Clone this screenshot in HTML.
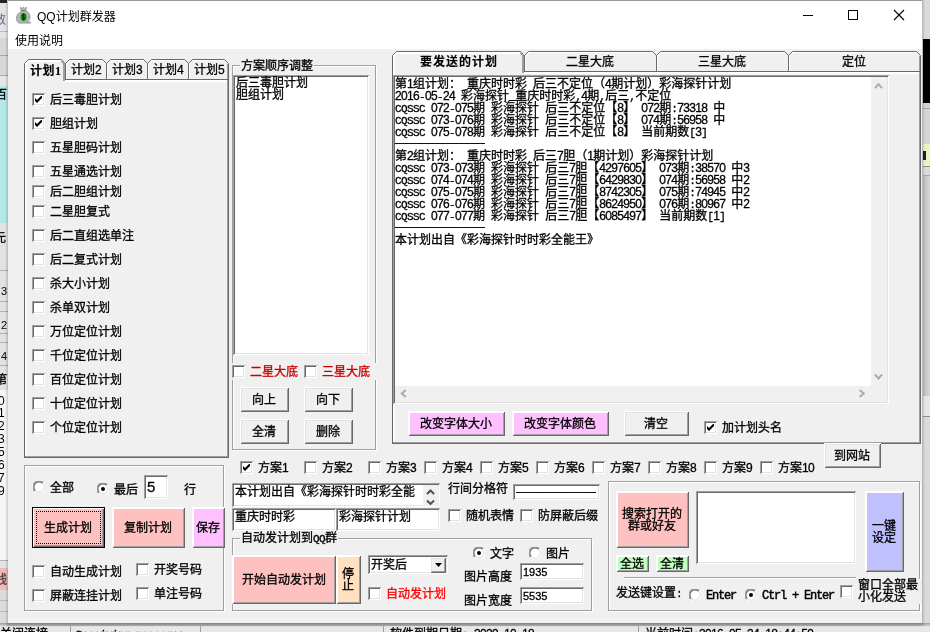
<!DOCTYPE html>
<html lang="zh-CN"><head><meta charset="utf-8"><title>QQ计划群发器</title>
<style>
html,body{margin:0;padding:0}
body{width:930px;height:632px;overflow:hidden;position:relative;background:#d9d9d9;
 font-family:"Liberation Sans","Noto Sans CJK SC",sans-serif;font-size:12px;line-height:12px;color:#000}
#root{position:absolute;left:0;top:0;width:930px;height:632px;overflow:hidden;will-change:transform;-webkit-text-stroke:0.3px}
.a{position:absolute;box-sizing:border-box}
.t{white-space:pre;font-size:12px;line-height:12px;height:12px}
.m{font-family:"Liberation Mono",monospace;font-size:11px;line-height:12px;letter-spacing:-0.6px}
.d{font-family:"Liberation Sans",sans-serif;font-size:12px;line-height:12px;letter-spacing:-0.67px}
.cb{background:#fff;box-shadow:inset 1px 1px 0 #a0a0a0,inset -1px -1px 0 #fff,inset 2px 2px 0 #696969,inset -2px -2px 0 #e3e3e3}
.ck{position:absolute;left:3px;top:3px}
.btn{box-shadow:inset 1px 1px 0 #fff,inset -1px -1px 0 #696969,inset 2px 2px 0 #fff,inset -2px -2px 0 #a0a0a0;display:flex;align-items:center;justify-content:center}
.btn.g{box-shadow:inset 1px 1px 0 #fff,inset -1px -1px 0 #696969,inset 2px 2px 0 #e3e3e3,inset -2px -2px 0 #a0a0a0}
.bt{text-align:center;white-space:pre;line-height:12px}
.tb{background:#fff;box-shadow:inset 1px 1px 0 #a0a0a0,inset -1px -1px 0 #fff,inset 2px 2px 0 #696969,inset -2px -2px 0 #e3e3e3;overflow:hidden}
.tt{position:absolute;left:3px;top:3px;white-space:pre;line-height:12px}
.fr{border:1px solid #a0a0a0;box-shadow:1px 1px 0 #fff,inset 1px 1px 0 #fff}
.red{color:#c80000}
</style></head><body><div id="root">
<div class="a " style="left:0px;top:0px;width:8px;height:632px;background:#e4e4e4"></div><div class="a " style="left:0px;top:0px;width:7px;height:3px;background:#202820"></div><div class="a " style="left:0px;top:31px;width:8px;height:1px;background:#b8b8b8"></div><div class="a " style="left:0px;top:38px;width:8px;height:48px;background:#d8d8d8"></div><div class="a " style="left:0px;top:55px;width:8px;height:1px;background:#a8a8a8"></div><div class="a " style="left:0px;top:75px;width:8px;height:1px;background:#a8a8a8"></div><div class="a " style="left:0px;top:76px;width:8px;height:10px;background:#e6e6e6"></div><div class="a " style="left:0px;top:86px;width:8px;height:137px;background:#b2eaea"></div><div class="a " style="left:0px;top:223px;width:8px;height:170px;background:#e2e2e2"></div><div class="a " style="left:0px;top:270px;width:8px;height:1px;background:#b0b0b0"></div><div class="a " style="left:0px;top:301px;width:8px;height:1px;background:#b0b0b0"></div><div class="a " style="left:0px;top:311px;width:8px;height:1px;background:#b0b0b0"></div><div class="a " style="left:0px;top:333px;width:8px;height:1px;background:#b0b0b0"></div><div class="a " style="left:0px;top:342px;width:8px;height:1px;background:#b0b0b0"></div><div class="a " style="left:0px;top:365px;width:8px;height:1px;background:#b0b0b0"></div><div class="a " style="left:0px;top:374px;width:8px;height:1px;background:#b0b0b0"></div><div class="a " style="left:0px;top:390px;width:8px;height:170px;background:#f6f6f6"></div><div class="a " style="left:0px;top:560px;width:8px;height:1px;background:#b0b0b0"></div><div class="a " style="left:0px;top:568px;width:8px;height:22px;background:#f4b8b8"></div><div class="a " style="left:0px;top:590px;width:8px;height:42px;background:#dcdcdc"></div><div class="a " style="left:0px;top:600px;width:8px;height:1px;background:#b8b8b8"></div><div class="a " style="left:0px;top:611px;width:8px;height:1px;background:#b8b8b8"></div><div class="a t" style="left:-6px;top:14px;color:#5b6b8c;-webkit-text-stroke:0">数</div><div class="a t" style="left:-5px;top:89px">百</div><div class="a t" style="left:-6px;top:232px">元</div><div class="a t" style="left:1px;top:285px;font-size:11px;-webkit-text-stroke:0">3</div><div class="a t" style="left:1px;top:319px;font-size:11px;-webkit-text-stroke:0">2</div><div class="a t" style="left:1px;top:350px;font-size:11px;-webkit-text-stroke:0">4</div><div class="a t" style="left:-5px;top:374px">第</div><div class="a t" style="left:-2px;top:395px;font-size:12px;-webkit-text-stroke:0">0</div><div class="a t" style="left:-2px;top:407px;font-size:12px;-webkit-text-stroke:0">1</div><div class="a t" style="left:-2px;top:420px;font-size:12px;-webkit-text-stroke:0">2</div><div class="a t" style="left:-2px;top:433px;font-size:12px;-webkit-text-stroke:0">3</div><div class="a t" style="left:-2px;top:446px;font-size:12px;-webkit-text-stroke:0">5</div><div class="a t" style="left:-2px;top:459px;font-size:12px;-webkit-text-stroke:0">6</div><div class="a t" style="left:-2px;top:472px;font-size:12px;-webkit-text-stroke:0">7</div><div class="a t" style="left:-2px;top:485px;font-size:12px;-webkit-text-stroke:0">9</div><div class="a t" style="left:-5px;top:574px;color:#444">线</div><div class="a " style="left:922px;top:0px;width:8px;height:632px;background:#dadada"></div><div class="a " style="left:923px;top:39px;width:7px;height:64px;background:#000"></div><div class="a " style="left:923px;top:103px;width:7px;height:41px;background:#d4d4d4"></div><div class="a " style="left:923px;top:108px;width:7px;height:1px;background:#a8a8a8"></div><div class="a " style="left:923px;top:144px;width:7px;height:22px;background:#efefc4"></div><div class="a " style="left:923px;top:151px;width:3px;height:9px;background:#222"></div><div class="a " style="left:923px;top:166px;width:7px;height:1px;background:#909090"></div><div class="a " style="left:923px;top:175px;width:7px;height:1px;background:#a8a8a8"></div><div class="a " style="left:923px;top:176px;width:7px;height:220px;background:linear-gradient(90deg,#bdbdbd,#d6d6d6)"></div><div class="a " style="left:923px;top:396px;width:7px;height:20px;background:#e6e6e6"></div><div class="a " style="left:923px;top:416px;width:7px;height:1px;background:#909090"></div><div class="a " style="left:0px;top:623px;width:930px;height:9px;background:#e8e8e8"></div><div class="a " style="left:0px;top:623px;width:930px;height:4px;background:linear-gradient(#9a9a9a,#e8e8e8)"></div><div class="a t " style="left:0px;top:628px;">关闭连接</div><div class="a t " style="left:76px;top:628px;"><span class="m">Receiving message:</span></div><div class="a t " style="left:390px;top:628px;">软件到期日期<span class="m">: </span><span class="d">2029</span><span class="m">-</span><span class="d">10</span><span class="m">-</span><span class="d">18</span></div><div class="a t " style="left:645px;top:628px;">当前时间<span class="m">:</span><span class="d">2016</span><span class="m">-</span><span class="d">05</span><span class="m">-</span><span class="d">24</span><span class="m"> </span><span class="d">18</span><span class="m">:</span><span class="d">44</span><span class="m">:</span><span class="d">59</span></div><div class="a " style="left:70px;top:626px;width:1px;height:6px;background:#a0a0a0"></div><div class="a " style="left:200px;top:626px;width:1px;height:6px;background:#a0a0a0"></div><div class="a " style="left:383px;top:626px;width:1px;height:6px;background:#a0a0a0"></div><div class="a " style="left:638px;top:626px;width:1px;height:6px;background:#a0a0a0"></div><div class="a " style="left:5px;top:0px;width:920px;height:626px;background:linear-gradient(90deg,rgba(0,0,0,.0),rgba(0,0,0,.18) 3px,rgba(0,0,0,.18) 917px,rgba(0,0,0,0))"></div><div class="a " style="left:8px;top:0px;width:914px;height:623px;background:#f0f0f0;border-top:1px solid #9a9a9a"></div><div class="a " style="left:8px;top:1px;width:914px;height:48px;background:#fff"></div><svg class="a" style="left:16px;top:6px" width="17" height="18" viewBox="0 0 17 18"><path d="M4.5 1.2l1.6 1.3 1.4-1.4 1.4 1.4 1.6-1.3-0.8 3.6c3 1.2 4.5 3.8 4.3 6.8-.2 2.5-1.8 4-3.2 4.3l3.6.300v.900H3.1c-1.8-.800-2.8-2.9-2.6-5.2.200-2.8 1.8-5 4.7-6.1z" fill="#b4b4b4" stroke="#8c8c8c" stroke-width=".8"/><path d="M5.3 4.6h4.4" stroke="#707070" stroke-width="1"/><ellipse cx="7.5" cy="11" rx="2.9" ry="4.1" fill="#0a8a0a"/><path d="M8.7 9.2c-.900-.900-2.4-.500-2.3.500.1 1.2 2.3.900 2.4 2.2.100 1.1-1.6 1.4-2.6.400M7.5 7.6v6.8" fill="none" stroke="#083808" stroke-width=".9"/></svg><div class="a" style="left:37px;top:9px;font-size:12px;line-height:16px;white-space:pre;-webkit-text-stroke:0">QQ计划群发器</div><div class="a" style="left:15px;top:33px;font-size:12px;line-height:16px;white-space:pre;-webkit-text-stroke:0">使用说明</div><svg class="a" style="left:790px;top:1px" width="132" height="30" viewBox="0 0 132 30"><path d="M13 14.5h10" stroke="#000" stroke-width="1"/><rect x="58.5" y="9.5" width="9" height="9" fill="none" stroke="#000" stroke-width="1"/><path d="M104 9l10 10M114 9l-10 10" stroke="#000" stroke-width="1.1"/></svg><svg class="a" style="left:22px;top:57px" width="210" height="404" viewBox="22 57 210 404"><rect x="24" y="79" width="1" height="379" fill="#696969"/><rect x="25" y="80" width="2" height="376" fill="#fff"/><rect x="25" y="80" width="202" height="2" fill="#fff"/><rect x="227" y="80" width="1" height="377" fill="#a0a0a0"/><rect x="228" y="79" width="1" height="379" fill="#696969"/><rect x="25" y="456" width="203" height="1" fill="#a0a0a0"/><rect x="24" y="457" width="205" height="1" fill="#696969"/><path d="M65.5 79V63.5l4 -4H102.5l4 4V79" fill="none" stroke="#696969"/><path d="M66.5 79V64l3.5 -3.5H102" fill="none" stroke="#fff"/><rect x="66" y="79" width="41" height="1" fill="#696969"/><path d="M106.5 79V63.5l4 -4H143.5l4 4V79" fill="none" stroke="#696969"/><path d="M107.5 79V64l3.5 -3.5H143" fill="none" stroke="#fff"/><rect x="107" y="79" width="41" height="1" fill="#696969"/><path d="M147.5 79V63.5l4 -4H184.5l4 4V79" fill="none" stroke="#696969"/><path d="M148.5 79V64l3.5 -3.5H184" fill="none" stroke="#fff"/><rect x="148" y="79" width="41" height="1" fill="#696969"/><path d="M188.5 79V63.5l4 -4H224.5l4 4V79" fill="none" stroke="#696969"/><path d="M189.5 79V64l3.5 -3.5H224" fill="none" stroke="#fff"/><rect x="189" y="79" width="40" height="1" fill="#696969"/><rect x="227" y="64" width="1" height="15" fill="#a0a0a0"/><path d="M25 82V63.5l4 -4H61l4 4V82z" fill="#f0f0f0"/><path d="M24.5 82V63.5l4 -4H61.5l3 3" fill="none" stroke="#696969"/><path d="M26 82V64l3 -3H61" fill="none" stroke="#fff" stroke-width="2"/><path d="M61.5 60.5l2.5 3V81" fill="none" stroke="#a0a0a0" stroke-width="2"/><rect x="65" y="63" width="1" height="17" fill="#696969"/></svg><div class="a t" style="left:30px;top:65px;font-weight:bold;letter-spacing:0.5px;-webkit-text-stroke:0.1px">计划<span style="font-family:'Liberation Serif',serif;font-size:12px">1</span></div><div class="a t " style="left:71px;top:64px;">计划<span class="d">2</span></div><div class="a t " style="left:112px;top:64px;">计划<span class="d">3</span></div><div class="a t " style="left:153px;top:64px;">计划<span class="d">4</span></div><div class="a t " style="left:194px;top:64px;">计划<span class="d">5</span></div><div class="a cb" style="left:32px;top:93px;width:13px;height:13px;"><svg class="ck" width="7" height="7" viewBox="0 0 7 7"><path d="M0 2v3l2 2 5-5V-1L2 4z" fill="#000"/></svg></div><div class="a t " style="left:50px;top:94px;">后三毒胆计划</div><div class="a cb" style="left:32px;top:117px;width:13px;height:13px;"><svg class="ck" width="7" height="7" viewBox="0 0 7 7"><path d="M0 2v3l2 2 5-5V-1L2 4z" fill="#000"/></svg></div><div class="a t " style="left:50px;top:118px;">胆组计划</div><div class="a cb" style="left:32px;top:141px;width:13px;height:13px;"></div><div class="a t " style="left:50px;top:142px;">五星胆码计划</div><div class="a cb" style="left:32px;top:165px;width:13px;height:13px;"></div><div class="a t " style="left:50px;top:166px;">五星通选计划</div><div class="a cb" style="left:32px;top:185px;width:13px;height:13px;"></div><div class="a t " style="left:50px;top:186px;">后二胆组计划</div><div class="a cb" style="left:32px;top:205px;width:13px;height:13px;"></div><div class="a t " style="left:50px;top:206px;">二星胆复式</div><div class="a cb" style="left:32px;top:229px;width:13px;height:13px;"></div><div class="a t " style="left:50px;top:230px;">后二直组选单注</div><div class="a cb" style="left:32px;top:253px;width:13px;height:13px;"></div><div class="a t " style="left:50px;top:254px;">后二复式计划</div><div class="a cb" style="left:32px;top:277px;width:13px;height:13px;"></div><div class="a t " style="left:50px;top:278px;">杀大小计划</div><div class="a cb" style="left:32px;top:301px;width:13px;height:13px;"></div><div class="a t " style="left:50px;top:302px;">杀单双计划</div><div class="a cb" style="left:32px;top:325px;width:13px;height:13px;"></div><div class="a t " style="left:50px;top:326px;">万位定位计划</div><div class="a cb" style="left:32px;top:349px;width:13px;height:13px;"></div><div class="a t " style="left:50px;top:350px;">千位定位计划</div><div class="a cb" style="left:32px;top:373px;width:13px;height:13px;"></div><div class="a t " style="left:50px;top:374px;">百位定位计划</div><div class="a cb" style="left:32px;top:397px;width:13px;height:13px;"></div><div class="a t " style="left:50px;top:398px;">十位定位计划</div><div class="a cb" style="left:32px;top:421px;width:13px;height:13px;"></div><div class="a t " style="left:50px;top:422px;">个位定位计划</div><div class="a fr" style="left:24px;top:465px;width:200px;height:146px;"></div><svg class="a" style="left:33px;top:481px" width="12" height="12" viewBox="0 0 12 12"><circle cx="6" cy="6" r="5.5" fill="#fff"/><path d="M1.6 10.4A6 6 0 0 1 10.4 1.6" fill="none" stroke="#a0a0a0" stroke-width="1.2"/><path d="M2.4 9.6A5 5 0 0 1 9.6 2.4" fill="none" stroke="#696969" stroke-width="1.1"/><path d="M10.4 1.6A6 6 0 0 1 1.6 10.4" fill="none" stroke="#fff" stroke-width="1.2"/><path d="M9.6 2.4A5 5 0 0 1 2.4 9.6" fill="none" stroke="#e3e3e3" stroke-width="1.1"/></svg><div class="a t " style="left:50px;top:482px;">全部</div><svg class="a" style="left:97px;top:483px" width="12" height="12" viewBox="0 0 12 12"><circle cx="6" cy="6" r="5.5" fill="#fff"/><path d="M1.6 10.4A6 6 0 0 1 10.4 1.6" fill="none" stroke="#a0a0a0" stroke-width="1.2"/><path d="M2.4 9.6A5 5 0 0 1 9.6 2.4" fill="none" stroke="#696969" stroke-width="1.1"/><path d="M10.4 1.6A6 6 0 0 1 1.6 10.4" fill="none" stroke="#fff" stroke-width="1.2"/><path d="M9.6 2.4A5 5 0 0 1 2.4 9.6" fill="none" stroke="#e3e3e3" stroke-width="1.1"/><circle cx="6" cy="6" r="2" fill="#000"/></svg><div class="a t " style="left:114px;top:484px;">最后</div><div class="a tb" style="left:144px;top:475px;width:24px;height:24px;"><div class="tt" style="font-size:15px;line-height:16px;top:4px;left:3px">5</div></div><div class="a t " style="left:184px;top:484px;">行</div><div class="a " style="left:32px;top:507px;width:73px;height:41px;background:#000"></div><div class="a btn " style="left:33px;top:508px;width:71px;height:39px;background:#ffc0c0;box-shadow:inset 1px 1px 0 #fff,inset -1px -1px 0 #696969,inset -2px -2px 0 #a0a0a0;padding-right:1px;"><div class="bt"><div>生成计划</div></div></div><div class="a " style="left:36px;top:511px;width:65px;height:33px;border:1px dotted #000"></div><div class="a btn " style="left:112px;top:507px;width:73px;height:41px;background:#ffc0c0;padding-right:1px;"><div class="bt"><div>复制计划</div></div></div><div class="a btn " style="left:192px;top:507px;width:33px;height:41px;background:#ffc0ff;padding-right:1px;"><div class="bt"><div>保存</div></div></div><div class="a cb" style="left:32px;top:565px;width:13px;height:13px;"></div><div class="a t " style="left:50px;top:566px;">自动生成计划</div><div class="a cb" style="left:32px;top:589px;width:13px;height:13px;"></div><div class="a t " style="left:50px;top:590px;">屏蔽连挂计划</div><div class="a cb" style="left:136px;top:563px;width:13px;height:13px;"></div><div class="a t " style="left:154px;top:564px;">开奖号码</div><div class="a cb" style="left:136px;top:587px;width:13px;height:13px;"></div><div class="a t " style="left:154px;top:588px;">单注号码</div><div class="a fr" style="left:232px;top:65px;width:144px;height:385px;"></div><div class="a t" style="left:240px;top:60px;background:#f0f0f0;padding:0 1px">方案顺序调整</div><div class="a tb" style="left:233px;top:75px;width:136px;height:280px;"><div class="tt" style="left:3px;top:2px">后三毒胆计划<br>胆组计划</div></div><div class="a " style="left:231px;top:363px;width:148px;height:17px;background:#f0f0f0"></div><div class="a cb" style="left:232px;top:365px;width:13px;height:13px;"></div><div class="a t " style="left:250px;top:366px;color:#c80000">二星大底</div><div class="a cb" style="left:304px;top:365px;width:13px;height:13px;"></div><div class="a t " style="left:322px;top:366px;color:#c80000">三星大底</div><div class="a btn g" style="left:240px;top:387px;width:49px;height:25px;background:#f0f0f0;padding-right:1px;"><div class="bt"><div>向上</div></div></div><div class="a btn g" style="left:304px;top:387px;width:49px;height:25px;background:#f0f0f0;padding-right:1px;"><div class="bt"><div>向下</div></div></div><div class="a btn g" style="left:240px;top:419px;width:49px;height:25px;background:#f0f0f0;padding-right:1px;"><div class="bt"><div>全清</div></div></div><div class="a btn g" style="left:304px;top:419px;width:49px;height:25px;background:#f0f0f0;padding-right:1px;"><div class="bt"><div>删除</div></div></div><svg class="a" style="left:390px;top:49px" width="534" height="398" viewBox="390 49 534 398"><rect x="392" y="71" width="1" height="373" fill="#696969"/><rect x="393" y="72" width="2" height="370" fill="#fff"/><rect x="393" y="72" width="526" height="2" fill="#fff"/><rect x="919" y="72" width="1" height="371" fill="#a0a0a0"/><rect x="920" y="71" width="1" height="373" fill="#696969"/><rect x="393" y="442" width="527" height="1" fill="#a0a0a0"/><rect x="392" y="443" width="529" height="1" fill="#696969"/><path d="M524.5 71V55.5l4 -4H652.5l4 4V71" fill="none" stroke="#696969"/><path d="M525.5 71V56l3.5 -3.5H652" fill="none" stroke="#fff"/><rect x="525" y="71" width="132" height="1" fill="#696969"/><path d="M656.5 71V55.5l4 -4H784.5l4 4V71" fill="none" stroke="#696969"/><path d="M657.5 71V56l3.5 -3.5H784" fill="none" stroke="#fff"/><rect x="657" y="71" width="132" height="1" fill="#696969"/><path d="M788.5 71V55.5l4 -4H916.5l4 4V71" fill="none" stroke="#696969"/><path d="M789.5 71V56l3.5 -3.5H916" fill="none" stroke="#fff"/><rect x="789" y="71" width="132" height="1" fill="#696969"/><rect x="919" y="56" width="1" height="15" fill="#a0a0a0"/><path d="M393 74V55.5l4 -4H520l4 4V74z" fill="#f0f0f0"/><path d="M392.5 74V55.5l4 -4H520.5l3 3" fill="none" stroke="#696969"/><path d="M394 74V56l3 -3H520" fill="none" stroke="#fff" stroke-width="2"/><path d="M520.5 52.5l2.5 3V73" fill="none" stroke="#a0a0a0" stroke-width="2"/><rect x="524" y="55" width="1" height="17" fill="#696969"/></svg><div class="a t" style="left:420px;top:56px;font-weight:bold;letter-spacing:1px;-webkit-text-stroke:0.1px">要发送的计划</div><div class="a t " style="left:566px;top:56px;">二星大底</div><div class="a t " style="left:698px;top:56px;">三星大底</div><div class="a t " style="left:842px;top:56px;">定位</div><style>.ln{height:12px;line-height:12px;white-space:pre}.dash{display:inline-block;width:90px;overflow:hidden;height:12px;vertical-align:top;letter-spacing:0}</style><div class="a tb" style="left:393px;top:75px;width:496px;height:329px;"><div class="a" style="left:2px;top:3px"><div class="ln">第<span class="d">1</span>组计划：<span class="m"> </span>重庆时时彩<span class="m"> </span>后三不定位（<span class="d">4</span>期计划）彩海探针计划</div><div class="ln"><span class="d">2016</span><span class="m">-</span><span class="d">05</span><span class="m">-</span><span class="d">24</span><span class="m"> </span>彩海探针<span class="m">_</span>重庆时时彩<span class="m">,</span><span class="d">4</span>期<span class="m">,</span>后三<span class="m">,</span>不定位</div><div class="ln"><span class="m">CQSSC </span><span class="d">072</span><span class="m">-</span><span class="d">075</span>期<span class="m"> </span>彩海探针<span class="m"> </span>后三不定位【<span class="d">8</span>】<span class="m"> </span><span class="d">072</span>期<span class="m">:</span><span class="d">73318</span><span class="m"> </span>中</div><div class="ln"><span class="m">CQSSC </span><span class="d">073</span><span class="m">-</span><span class="d">076</span>期<span class="m"> </span>彩海探针<span class="m"> </span>后三不定位【<span class="d">8</span>】<span class="m"> </span><span class="d">074</span>期<span class="m">:</span><span class="d">56958</span><span class="m"> </span>中</div><div class="ln"><span class="m">CQSSC </span><span class="d">075</span><span class="m">-</span><span class="d">078</span>期<span class="m"> </span>彩海探针<span class="m"> </span>后三不定位【<span class="d">8</span>】<span class="m"> </span>当前期数<span class="m">[</span><span class="d">3</span><span class="m">]</span></div><div class="ln"><span class="dash" style="position:relative;top:-1px">————————</span></div><div class="ln">第<span class="d">2</span>组计划：<span class="m"> </span>重庆时时彩<span class="m"> </span>后三<span class="d">7</span>胆（<span class="d">1</span>期计划）彩海探针计划</div><div class="ln"><span class="m">CQSSC </span><span class="d">073</span><span class="m">-</span><span class="d">073</span>期<span class="m"> </span>彩海探针<span class="m"> </span>后三<span class="d">7</span>胆【<span class="d">4297605</span>】<span class="m"> </span><span class="d">073</span>期<span class="m">:</span><span class="d">38570</span><span class="m"> </span>中<span class="d">3</span></div><div class="ln"><span class="m">CQSSC </span><span class="d">074</span><span class="m">-</span><span class="d">074</span>期<span class="m"> </span>彩海探针<span class="m"> </span>后三<span class="d">7</span>胆【<span class="d">6429830</span>】<span class="m"> </span><span class="d">074</span>期<span class="m">:</span><span class="d">56958</span><span class="m"> </span>中<span class="d">2</span></div><div class="ln"><span class="m">CQSSC </span><span class="d">075</span><span class="m">-</span><span class="d">075</span>期<span class="m"> </span>彩海探针<span class="m"> </span>后三<span class="d">7</span>胆【<span class="d">8742305</span>】<span class="m"> </span><span class="d">075</span>期<span class="m">:</span><span class="d">74945</span><span class="m"> </span>中<span class="d">2</span></div><div class="ln"><span class="m">CQSSC </span><span class="d">076</span><span class="m">-</span><span class="d">076</span>期<span class="m"> </span>彩海探针<span class="m"> </span>后三<span class="d">7</span>胆【<span class="d">8624950</span>】<span class="m"> </span><span class="d">076</span>期<span class="m">:</span><span class="d">80967</span><span class="m"> </span>中<span class="d">2</span></div><div class="ln"><span class="m">CQSSC </span><span class="d">077</span><span class="m">-</span><span class="d">077</span>期<span class="m"> </span>彩海探针<span class="m"> </span>后三<span class="d">7</span>胆【<span class="d">6085497</span>】<span class="m"> </span>当前期数<span class="m">[</span><span class="d">1</span><span class="m">]</span></div><div class="ln"><span class="dash" style="position:relative;top:-1px">————————</span></div><div class="ln">本计划出自《彩海探针时时彩全能王》</div></div></div><div class="a " style="left:871px;top:77px;width:16px;height:309px;background:#f0f0f0"></div><div class="a " style="left:395px;top:386px;width:492px;height:16px;background:#f0f0f0"></div><svg class="a" style="left:871px;top:77px" width="15" height="309" viewBox="0 0 15 309"><path d="M4 11.2L7.5 7.2 11 11.2M4 297.5L7.5 301.5 11 297.5" stroke="#ababab" stroke-width="2" fill="none"/></svg><svg class="a" style="left:395px;top:386px" width="476" height="15" viewBox="0 0 476 15"><path d="M10.8 4L6.8 7.5 10.8 11M464.7 4L468.7 7.5 464.7 11" stroke="#ababab" stroke-width="2" fill="none"/></svg><div class="a btn " style="left:408px;top:411px;width:97px;height:25px;background:#ffc0ff;padding-right:1px;"><div class="bt"><div>改变字体大小</div></div></div><div class="a btn " style="left:512px;top:411px;width:97px;height:25px;background:#ffc0ff;padding-right:1px;"><div class="bt"><div>改变字体颜色</div></div></div><div class="a btn g" style="left:624px;top:411px;width:65px;height:25px;background:#f0f0f0;padding-right:1px;"><div class="bt"><div>清空</div></div></div><div class="a cb" style="left:704px;top:421px;width:13px;height:13px;"><svg class="ck" width="7" height="7" viewBox="0 0 7 7"><path d="M0 2v3l2 2 5-5V-1L2 4z" fill="#000"/></svg></div><div class="a t " style="left:722px;top:422px;">加计划头名</div><div class="a btn g" style="left:824px;top:443px;width:57px;height:25px;background:#f0f0f0;padding-right:1px;"><div class="bt"><div>到网站</div></div></div><div class="a cb" style="left:240px;top:461px;width:13px;height:13px;"><svg class="ck" width="7" height="7" viewBox="0 0 7 7"><path d="M0 2v3l2 2 5-5V-1L2 4z" fill="#000"/></svg></div><div class="a t " style="left:258px;top:462px;">方案<span class="d">1</span></div><div class="a cb" style="left:304px;top:461px;width:13px;height:13px;"></div><div class="a t " style="left:322px;top:462px;">方案<span class="d">2</span></div><div class="a cb" style="left:368px;top:461px;width:13px;height:13px;"></div><div class="a t " style="left:386px;top:462px;">方案<span class="d">3</span></div><div class="a cb" style="left:424px;top:461px;width:13px;height:13px;"></div><div class="a t " style="left:442px;top:462px;">方案<span class="d">4</span></div><div class="a cb" style="left:480px;top:461px;width:13px;height:13px;"></div><div class="a t " style="left:498px;top:462px;">方案<span class="d">5</span></div><div class="a cb" style="left:536px;top:461px;width:13px;height:13px;"></div><div class="a t " style="left:554px;top:462px;">方案<span class="d">6</span></div><div class="a cb" style="left:592px;top:461px;width:13px;height:13px;"></div><div class="a t " style="left:610px;top:462px;">方案<span class="d">7</span></div><div class="a cb" style="left:648px;top:461px;width:13px;height:13px;"></div><div class="a t " style="left:666px;top:462px;">方案<span class="d">8</span></div><div class="a cb" style="left:704px;top:461px;width:13px;height:13px;"></div><div class="a t " style="left:722px;top:462px;">方案<span class="d">9</span></div><div class="a cb" style="left:760px;top:461px;width:13px;height:13px;"></div><div class="a t " style="left:778px;top:462px;">方案<span class="d">10</span></div><div class="a tb" style="left:232px;top:483px;width:208px;height:24px;"><div class="tt" style="">本计划出自《彩海探针时时彩全能</div></div><div class="a " style="left:423px;top:485px;width:16px;height:21px;background:#f0f0f0"></div><svg class="a" style="left:424px;top:485px" width="14" height="20" viewBox="0 0 14 20"><path d="M3 9L6.5 5.5 10 9M3 15.5L6.5 19 10 15.5" stroke="#505050" stroke-width="2" fill="none"/></svg><div class="a tb" style="left:232px;top:508px;width:104px;height:23px;"><div class="tt" style="">重庆时时彩</div></div><div class="a tb" style="left:336px;top:508px;width:104px;height:23px;"><div class="tt" style="">彩海探针计划</div></div><div class="a t " style="left:448px;top:483px;">行间分格符</div><div class="a tb" style="left:513px;top:484px;width:87px;height:16px;"><div class="tt" style="top:2px;left:3px"><span class="dash" style="width:80px">————————</span></div></div><div class="a cb" style="left:448px;top:509px;width:13px;height:13px;"></div><div class="a t " style="left:466px;top:510px;">随机表情</div><div class="a cb" style="left:520px;top:509px;width:13px;height:13px;"></div><div class="a t " style="left:538px;top:510px;">防屏蔽后缀</div><div class="a fr" style="left:232px;top:538px;width:360px;height:73px;"></div><div class="a t" style="left:240px;top:532px;background:#f0f0f0;padding:0 1px">自动发计划到<span class="m">QQ</span>群</div><div class="a btn " style="left:232px;top:555px;width:104px;height:49px;background:#ffc0c0;"><div class="bt"><div>开始自动发计划</div></div></div><div class="a btn " style="left:336px;top:555px;width:25px;height:49px;background:#ffe0c0;padding-right:1px;"><div class="bt"><div>停</div><div>止</div></div></div><div class="a tb" style="left:368px;top:555px;width:80px;height:19px;"><div class="tt" style="top:4px">开奖后</div></div><div class="a btn g" style="left:430px;top:557px;width:16px;height:16px;background:#f0f0f0"><svg width="7" height="4" viewBox="0 0 7 4"><path d="M0 0h7L3.5 4z" fill="#000"/></svg></div><div class="a cb" style="left:368px;top:587px;width:13px;height:13px;"></div><div class="a t " style="left:386px;top:588px;color:#ff0000">自动发计划</div><svg class="a" style="left:473px;top:547px" width="12" height="12" viewBox="0 0 12 12"><circle cx="6" cy="6" r="5.5" fill="#fff"/><path d="M1.6 10.4A6 6 0 0 1 10.4 1.6" fill="none" stroke="#a0a0a0" stroke-width="1.2"/><path d="M2.4 9.6A5 5 0 0 1 9.6 2.4" fill="none" stroke="#696969" stroke-width="1.1"/><path d="M10.4 1.6A6 6 0 0 1 1.6 10.4" fill="none" stroke="#fff" stroke-width="1.2"/><path d="M9.6 2.4A5 5 0 0 1 2.4 9.6" fill="none" stroke="#e3e3e3" stroke-width="1.1"/><circle cx="6" cy="6" r="2" fill="#000"/></svg><div class="a t " style="left:490px;top:548px;">文字</div><svg class="a" style="left:529px;top:547px" width="12" height="12" viewBox="0 0 12 12"><circle cx="6" cy="6" r="5.5" fill="#fff"/><path d="M1.6 10.4A6 6 0 0 1 10.4 1.6" fill="none" stroke="#a0a0a0" stroke-width="1.2"/><path d="M2.4 9.6A5 5 0 0 1 9.6 2.4" fill="none" stroke="#696969" stroke-width="1.1"/><path d="M10.4 1.6A6 6 0 0 1 1.6 10.4" fill="none" stroke="#fff" stroke-width="1.2"/><path d="M9.6 2.4A5 5 0 0 1 2.4 9.6" fill="none" stroke="#e3e3e3" stroke-width="1.1"/></svg><div class="a t " style="left:546px;top:548px;">图片</div><div class="a t " style="left:464px;top:571px;">图片高度</div><div class="a t " style="left:464px;top:595px;">图片宽度</div><div class="a tb" style="left:520px;top:563px;width:64px;height:17px;"><div class="tt" style="font-size:11px;top:3px;left:3px;font-family:'Liberation Sans'">1935</div></div><div class="a tb" style="left:520px;top:587px;width:64px;height:17px;"><div class="tt" style="font-size:11px;top:3px;left:3px;font-family:'Liberation Sans'">5535</div></div><div class="a fr" style="left:608px;top:481px;width:312px;height:130px;"></div><div class="a btn " style="left:616px;top:491px;width:73px;height:57px;background:#ffc0c0;padding-right:1px;"><div class="bt"><div>搜索打开的</div><div>群或好友</div></div></div><div class="a tb" style="left:696px;top:491px;width:160px;height:73px;"></div><div class="a btn " style="left:865px;top:491px;width:39px;height:81px;background:#c0c0ff;padding-right:1px;"><div class="bt"><div>一键</div><div>设定</div></div></div><div class="a btn " style="left:616px;top:555px;width:33px;height:17px;background:#c0ffc0;padding-right:1px;"><div class="bt"><div>全选</div></div></div><div class="a btn " style="left:656px;top:555px;width:33px;height:17px;background:#c0ffc0;padding-right:1px;"><div class="bt"><div>全清</div></div></div><div class="a " style="left:624px;top:577px;width:232px;height:2px;border-top:1px solid #a0a0a0;border-bottom:1px solid #fff"></div><div class="a t " style="left:616px;top:587px;">发送键设置<span class="m">:</span></div><svg class="a" style="left:689px;top:589px" width="12" height="12" viewBox="0 0 12 12"><circle cx="6" cy="6" r="5.5" fill="#fff"/><path d="M1.6 10.4A6 6 0 0 1 10.4 1.6" fill="none" stroke="#a0a0a0" stroke-width="1.2"/><path d="M2.4 9.6A5 5 0 0 1 9.6 2.4" fill="none" stroke="#696969" stroke-width="1.1"/><path d="M10.4 1.6A6 6 0 0 1 1.6 10.4" fill="none" stroke="#fff" stroke-width="1.2"/><path d="M9.6 2.4A5 5 0 0 1 2.4 9.6" fill="none" stroke="#e3e3e3" stroke-width="1.1"/></svg><div class="a t" style="left:706px;top:590px;font-family:'Liberation Mono',monospace;font-size:12px;letter-spacing:-1.2px;-webkit-text-stroke:0.45px">Enter</div><svg class="a" style="left:745px;top:589px" width="12" height="12" viewBox="0 0 12 12"><circle cx="6" cy="6" r="5.5" fill="#fff"/><path d="M1.6 10.4A6 6 0 0 1 10.4 1.6" fill="none" stroke="#a0a0a0" stroke-width="1.2"/><path d="M2.4 9.6A5 5 0 0 1 9.6 2.4" fill="none" stroke="#696969" stroke-width="1.1"/><path d="M10.4 1.6A6 6 0 0 1 1.6 10.4" fill="none" stroke="#fff" stroke-width="1.2"/><path d="M9.6 2.4A5 5 0 0 1 2.4 9.6" fill="none" stroke="#e3e3e3" stroke-width="1.1"/><circle cx="6" cy="6" r="2" fill="#000"/></svg><div class="a t" style="left:762px;top:590px;font-family:'Liberation Mono',monospace;font-size:12px;letter-spacing:-1.2px;-webkit-text-stroke:0.45px">Ctrl + Enter</div><div class="a " style="left:838px;top:579px;width:84px;height:25px;background:#f0f0f0"></div><div class="a cb" style="left:840px;top:585px;width:13px;height:13px;"></div><div class="a" style="left:858px;top:579px;line-height:12px;white-space:pre">窗口全部最
小化发送</div></div></body></html>
